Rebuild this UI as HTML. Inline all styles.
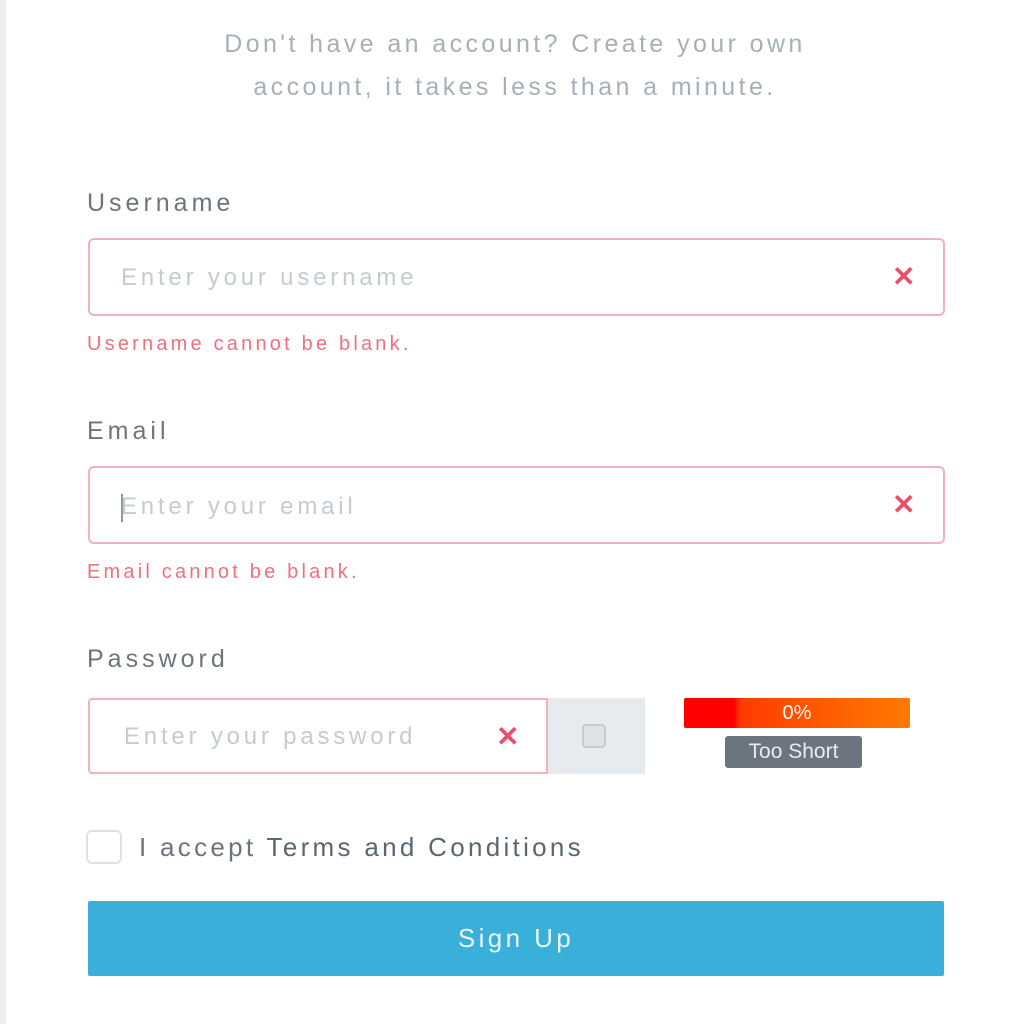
<!DOCTYPE html>
<html><head><style>
body{margin:0;width:1024px;height:1024px;background:#fff;position:relative;overflow:hidden;font-family:"Liberation Sans",sans-serif;}
.strip{position:absolute;left:0;top:0;width:6px;height:1024px;background:#eeeff1}
.a{position:absolute;white-space:nowrap}
.sub{left:0;width:1030px;text-align:center;color:#a6b0b6;font-size:25px;letter-spacing:3.4px}
.lbl{left:87px;color:#6c757d;font-size:25px;letter-spacing:4px}
.inp{position:absolute;border:2px solid #f3b2ba;border-radius:6px;background:#fff;box-sizing:border-box}
.ph{color:#c4cbd1;font-size:24px;letter-spacing:3.8px}
.x{color:#e8506a;font-size:28px;font-weight:bold}
.err{left:87px;color:#f0707f;font-size:20px;letter-spacing:3.2px}
</style></head><body>
<div class="strip"></div>
<div class="a sub" style="top:30px">Don't have an account? Create your own</div>
<div class="a sub" style="top:73px">account, it takes less than a minute.</div>

<div class="a lbl" style="top:189px">Username</div>
<div class="inp" style="left:88px;top:238px;width:857px;height:78px"></div>
<div class="a ph" style="left:121px;top:264px">Enter your username</div>
<div class="a x" style="left:892px;top:260px">✕</div>
<div class="a err" style="top:333px">Username cannot be blank.</div>

<div class="a lbl" style="top:417px">Email</div>
<div class="inp" style="left:88px;top:466px;width:857px;height:78px"></div>
<div class="a" style="left:121px;top:494px;width:2px;height:28px;background:#999"></div>
<div class="a ph" style="left:121px;top:493px">Enter your email</div>
<div class="a x" style="left:892px;top:488px">✕</div>
<div class="a err" style="top:561px">Email cannot be blank.</div>

<div class="a lbl" style="top:645px">Password</div>
<div class="inp" style="left:88px;top:698px;width:460px;height:76px;border-radius:4px 0 0 4px"></div>
<div class="a" style="left:548px;top:698px;width:97px;height:76px;background:#e8ebee"></div>
<div class="a" style="left:582px;top:724px;width:24px;height:24px;border:2px solid #c8ccd0;border-radius:4px;background:#dfe2e5;box-sizing:border-box"></div>
<div class="a ph" style="left:124px;top:723px">Enter your password</div>
<div class="a x" style="left:496px;top:720px">✕</div>
<div class="a" style="left:684px;top:698px;width:226px;height:30px;background:linear-gradient(90deg,#f00 0%,#f00 22%,#ff3a00 25%,#ff5a00 60%,#ff7a00 100%);border-radius:2px"></div>
<div class="a" style="left:684px;top:698px;width:226px;text-align:center;color:#fff;font-size:20px;line-height:30px">0%</div>
<div class="a" style="left:725px;top:736px;width:137px;height:32px;background:#6c757d;border-radius:3px;color:#e8ecef;font-size:21px;line-height:32px;text-align:center">Too Short</div>

<div class="a" style="left:86px;top:830px;width:36px;height:34px;border:2px solid #dde1e4;border-radius:6px;box-sizing:border-box"></div>
<div class="a" style="left:139px;top:832px;font-size:26px;color:#6c757d;letter-spacing:3.3px">I accept <span style="color:#5a6670">Terms and Conditions</span></div>

<div class="a" style="left:88px;top:901px;width:856px;height:75px;background:#39afd9;border-radius:2px;color:#e6f6fc;font-size:26px;line-height:75px;text-align:center;letter-spacing:3.4px">Sign Up</div>
</body></html>
